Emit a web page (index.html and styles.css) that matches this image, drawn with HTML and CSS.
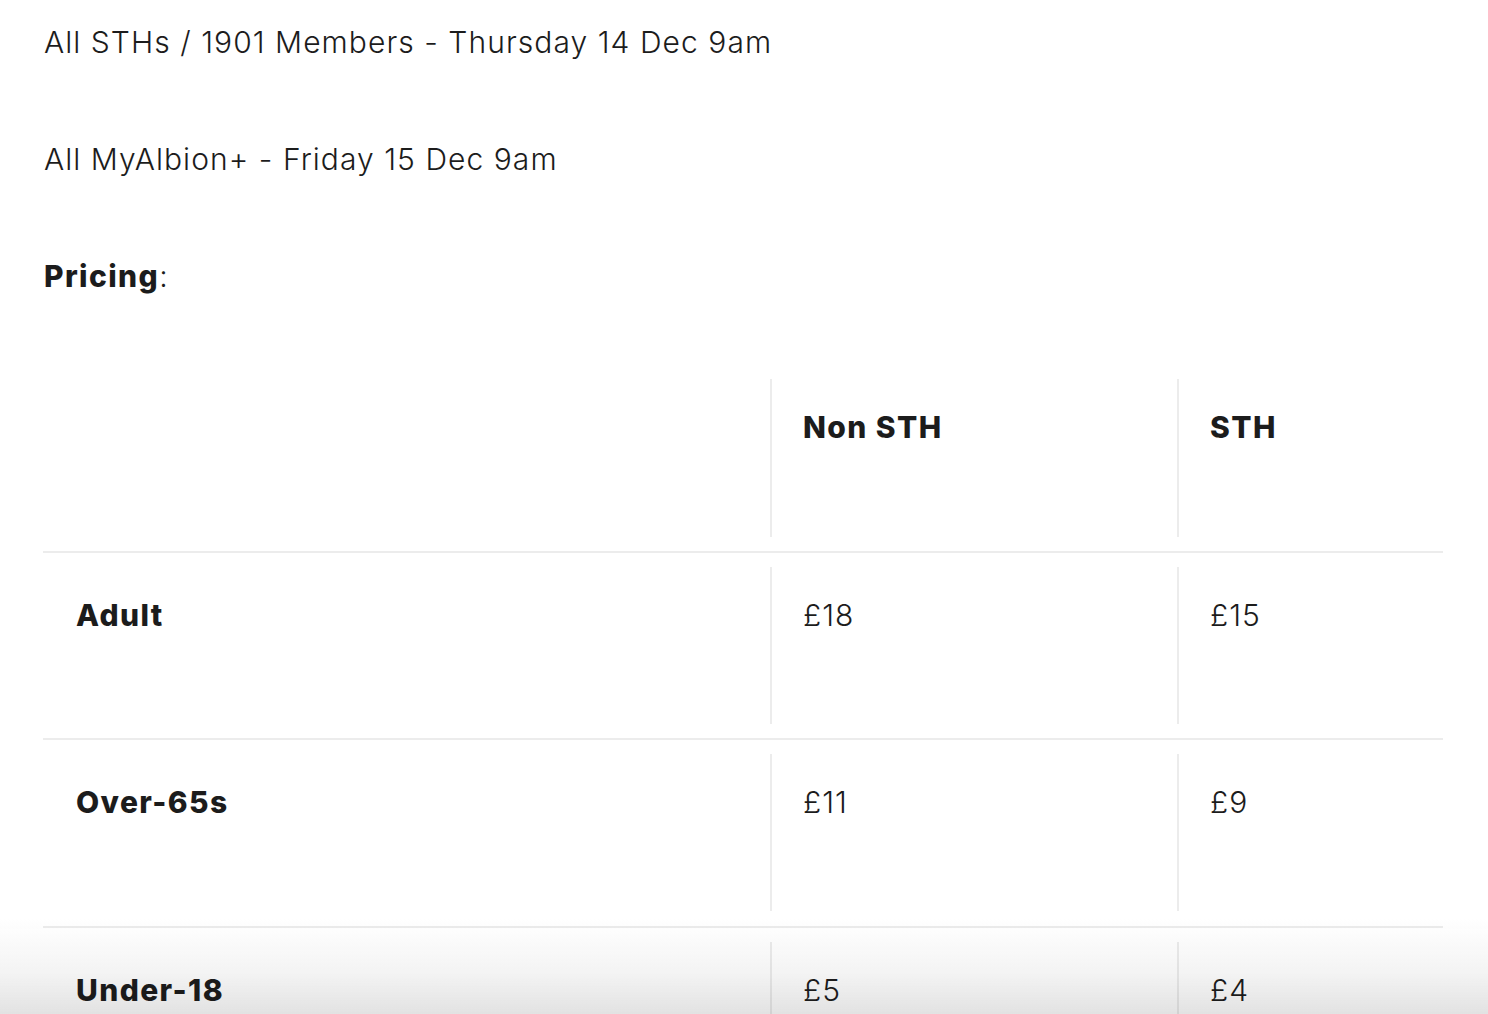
FILE: index.html
```html
<!DOCTYPE html>
<html lang="en">
<head>
<meta charset="utf-8">
<title>Pricing</title>
<link rel="stylesheet" href="styles.css">
</head>
<body>
<main class="content">
  <p class="para">All STHs / 1901 Members - Thursday 14 Dec 9am</p>
  <p class="para">All MyAlbion+ - Friday 15 Dec 9am</p>
  <p class="para"><strong>Pricing</strong>:</p>

  <div class="table">
    <div class="row row-head">
      <div class="cell cell-label"></div>
      <div class="cell cell-mid"><strong>Non STH</strong></div>
      <div class="cell cell-end"><strong>STH</strong></div>
    </div>
    <div class="row">
      <div class="cell cell-label"><strong>Adult</strong></div>
      <div class="cell cell-mid">£18</div>
      <div class="cell cell-end">£15</div>
    </div>
    <div class="row row-tall">
      <div class="cell cell-label"><strong>Over-65s</strong></div>
      <div class="cell cell-mid">£11</div>
      <div class="cell cell-end">£9</div>
    </div>
    <div class="row row-last">
      <div class="cell cell-label"><strong>Under-18</strong></div>
      <div class="cell cell-mid">£5</div>
      <div class="cell cell-end">£4</div>
    </div>
  </div>
</main>
<div class="fade"></div>
</body>
</html>
```

FILE: styles.css
```css
html, body {
  margin: 0;
  padding: 0;
  background: #ffffff;
}

body {
  font-family: Inter, "Noto Sans", "Liberation Sans", sans-serif;
  font-size: 30px;
  line-height: 45px;
  font-weight: 300;
  letter-spacing: 1.05px;
  color: #1c1c1c;
  overflow: hidden;
}

.content {
  padding: 20px 45px 0 43px;
}

.para {
  margin: 0 0 72px 1px;
}

.para:last-of-type {
  margin-bottom: 0;
}

strong {
  font-weight: 800;
  letter-spacing: 1.4px;
}

.table {
  margin-top: 66px;
  display: flex;
  flex-direction: column;
}

.row {
  display: grid;
  grid-template-columns: 727px 407px 1fr;
  padding: 14px 0 14px;
  border-bottom: 2px solid #ececec;
}

.row-tall {
  padding-bottom: 15px;
}

.row-last {
  padding-top: 14px;
}

.cell {
  height: 157px;
  box-sizing: border-box;
  padding: 26px 0 0 31px;
  border-left: 2px solid #ececec;
}

.row-head .cell {
  height: 158px;
}

.cell-label {
  border-left-color: transparent;
}

.fade {
  position: fixed;
  left: 0;
  right: 0;
  bottom: 0;
  height: 95px;
  background: linear-gradient(to bottom, rgba(228, 228, 228, 0) 0%, rgba(228, 228, 228, 0.4) 55%, rgba(226, 226, 226, 1) 100%);
  mix-blend-mode: multiply;
  pointer-events: none;
}
```
